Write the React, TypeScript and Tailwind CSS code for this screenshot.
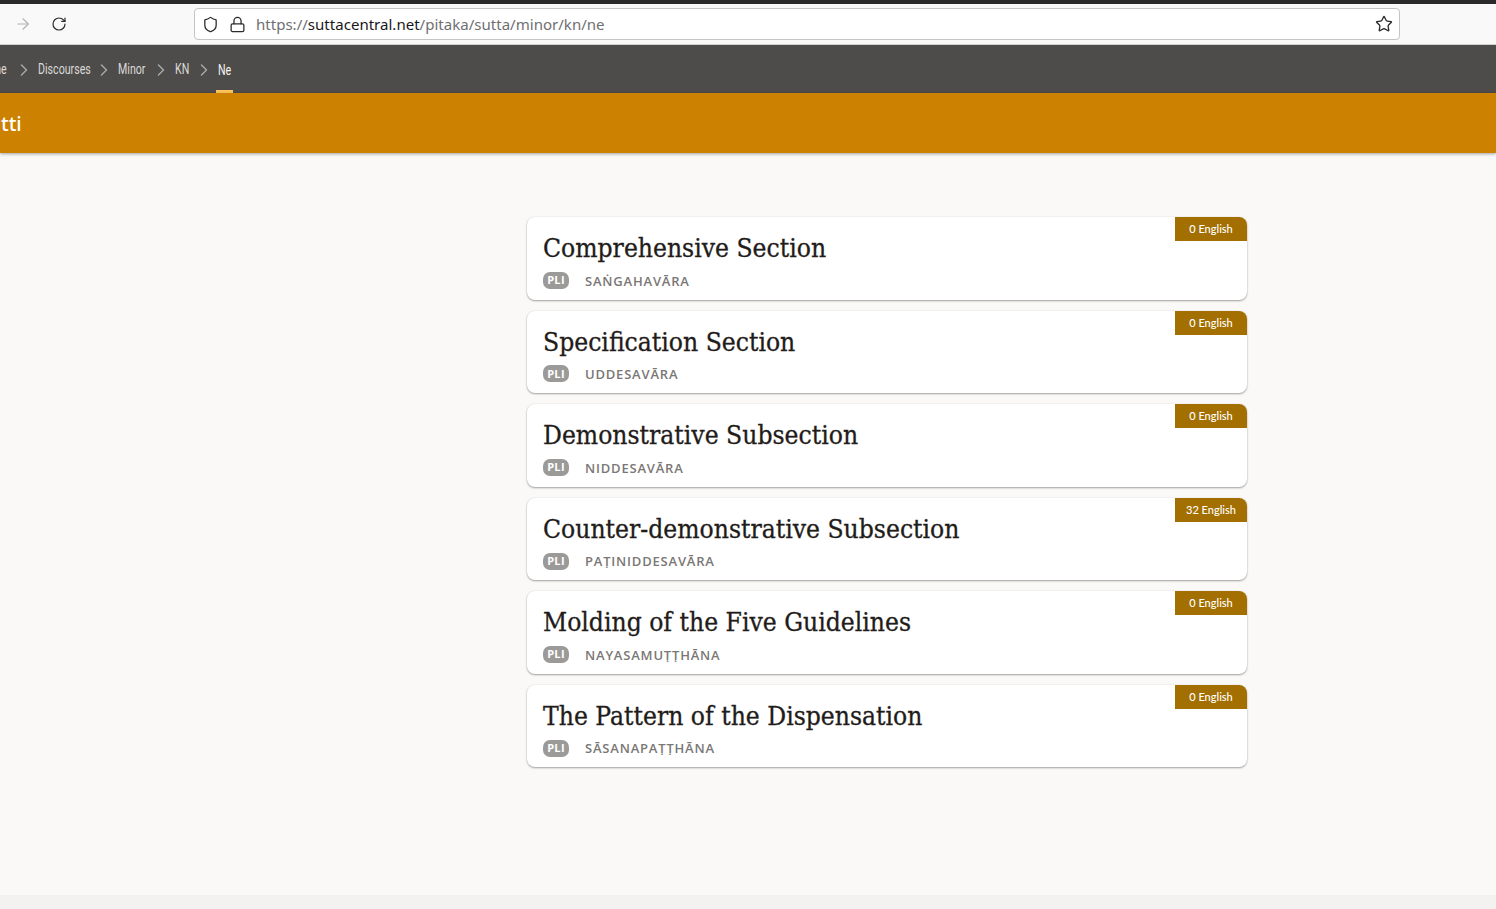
import { ArrowRight, ChevronRight, Lock, RotateCw, Shield, Star } from "lucide-react";

const sections = [
  { title: "Comprehensive Section", pali: "Saṅgahavāra", count: 0 },
  { title: "Specification Section", pali: "Uddesavāra", count: 0 },
  { title: "Demonstrative Subsection", pali: "Niddesavāra", count: 0 },
  { title: "Counter-demonstrative Subsection", pali: "Paṭiniddesavāra", count: 32 },
  { title: "Molding of the Five Guidelines", pali: "Nayasamuṭṭhāna", count: 0 },
  { title: "The Pattern of the Dispensation", pali: "Sāsanapaṭṭhāna", count: 0 },
];

const crumbs = [
  { label: "Home", width: "w-[32px]" },
  { label: "Discourses", width: "w-[52px]" },
  { label: "Minor", width: "w-[29px]" },
  { label: "KN", width: "w-[15px]" },
];

function SectionCard({ title, pali, count }: { title: string; pali: string; count: number }) {
  return (
    <a className="relative block h-[82.6px] w-[720px] rounded-lg bg-white pl-4 pt-[14px] shadow-[0_1px_2px_rgba(0,0,0,0.35),0_0_2px_rgba(0,0,0,0.08)]">
      <h2 className="font-['DejaVu_Serif_Condensed','Liberation_Serif',serif] text-[26.2px] leading-[34px] text-[#1f1c1a] [-webkit-text-stroke:0.3px_#1f1c1a]">
        {title}
      </h2>
      <div className="mt-[6.7px] flex items-center gap-4">
        <span className="mb-[2px] flex h-[17px] w-[26px] items-center justify-center rounded-[7px] bg-[#9b9a99] font-['Open_Sans',sans-serif] text-[11px] font-bold tracking-[0.3px] text-white">
          PLI
        </span>
        <span className="font-['Open_Sans',sans-serif] text-[13px] font-semibold uppercase tracking-[0.8px] text-[#7a7775]">
          {pali}
        </span>
      </div>
      <span className="absolute right-0 top-0 flex h-6 w-[72px] items-center justify-center rounded-tr-lg bg-[#a36f00] pt-[0.6px] font-['Lato',sans-serif] text-[11px] font-medium text-white">
        {count} English
      </span>
    </a>
  );
}

export default function App() {
  return (
    <div className="flex h-[909px] w-[1496px] flex-col overflow-hidden bg-[#faf9f7] font-['Noto_Sans',sans-serif]">
      <div className="h-1 bg-[#2b2a2a]" />

      {/* browser toolbar */}
      <div className="flex h-[41px] items-center border-b border-[#cfcfd0] bg-[#f9f9fa]">
        <ArrowRight size={18} strokeWidth={1.5} className="ml-[14px] text-[#b3b3b5]" />
        <RotateCw size={16} strokeWidth={1.8} className="ml-[19px] text-[#2c2c2e]" />
        <div className="ml-[127px] flex h-8 w-[1206px] items-center rounded border border-[#c4c4c6] bg-white pl-[7px] pr-1.5">
          <Shield size={17} strokeWidth={1.8} className="text-[#2b2b2d]" />
          <Lock size={17} strokeWidth={1.8} className="ml-[10px] text-[#2b2b2d]" />
          <span className="ml-[10px] text-[15.05px] text-[#6f6f72]">
            https://<span className="text-[#18181a]">suttacentral.net</span>/pitaka/sutta/minor/kn/ne
          </span>
          <Star size={18} strokeWidth={1.8} className="ml-auto text-[#2b2b2d]" />
        </div>
      </div>

      {/* breadcrumb */}
      <nav className="flex h-12 items-center overflow-hidden bg-[#4d4c4a] pt-px font-['Roboto',sans-serif] text-[14px] text-[#dcdad8]">
        <div className="-ml-[22px] flex items-center">
          {crumbs.map((c) => (
            <div key={c.label} className="flex items-center">
              <span className={`${c.width} whitespace-nowrap`}>
                <span className="inline-block origin-left scale-x-[0.76]">{c.label}</span>
              </span>
              <ChevronRight size={20} strokeWidth={1.8} className="mx-[4px] text-[#a8a7a5]" />
            </div>
          ))}
          <div className="relative -my-px -ml-[2px] flex h-12 w-[17px] items-center whitespace-nowrap pl-[2px] pt-px text-[#f4f2f0]">
            <span className="inline-block origin-left scale-x-[0.76]">Ne</span>
            <span className="absolute bottom-0 left-0 h-1 w-[17px] bg-[#ffc65c]" />
          </div>
        </div>
      </nav>

      <div className="z-10 flex h-[60px] items-center bg-[#cc8200] pl-px pt-[2px] text-[20px] font-medium text-white shadow-[0_1px_3px_rgba(0,0,0,0.35)]">
        tti
      </div>

      <main className="flex flex-1 flex-col gap-[10.95px] pl-[527px] pt-[64px]">
        {sections.map((s) => (
          <SectionCard key={s.title} {...s} />
        ))}
      </main>

      <footer className="h-[14px] bg-[#f3f2f0]" />
    </div>
  );
}
